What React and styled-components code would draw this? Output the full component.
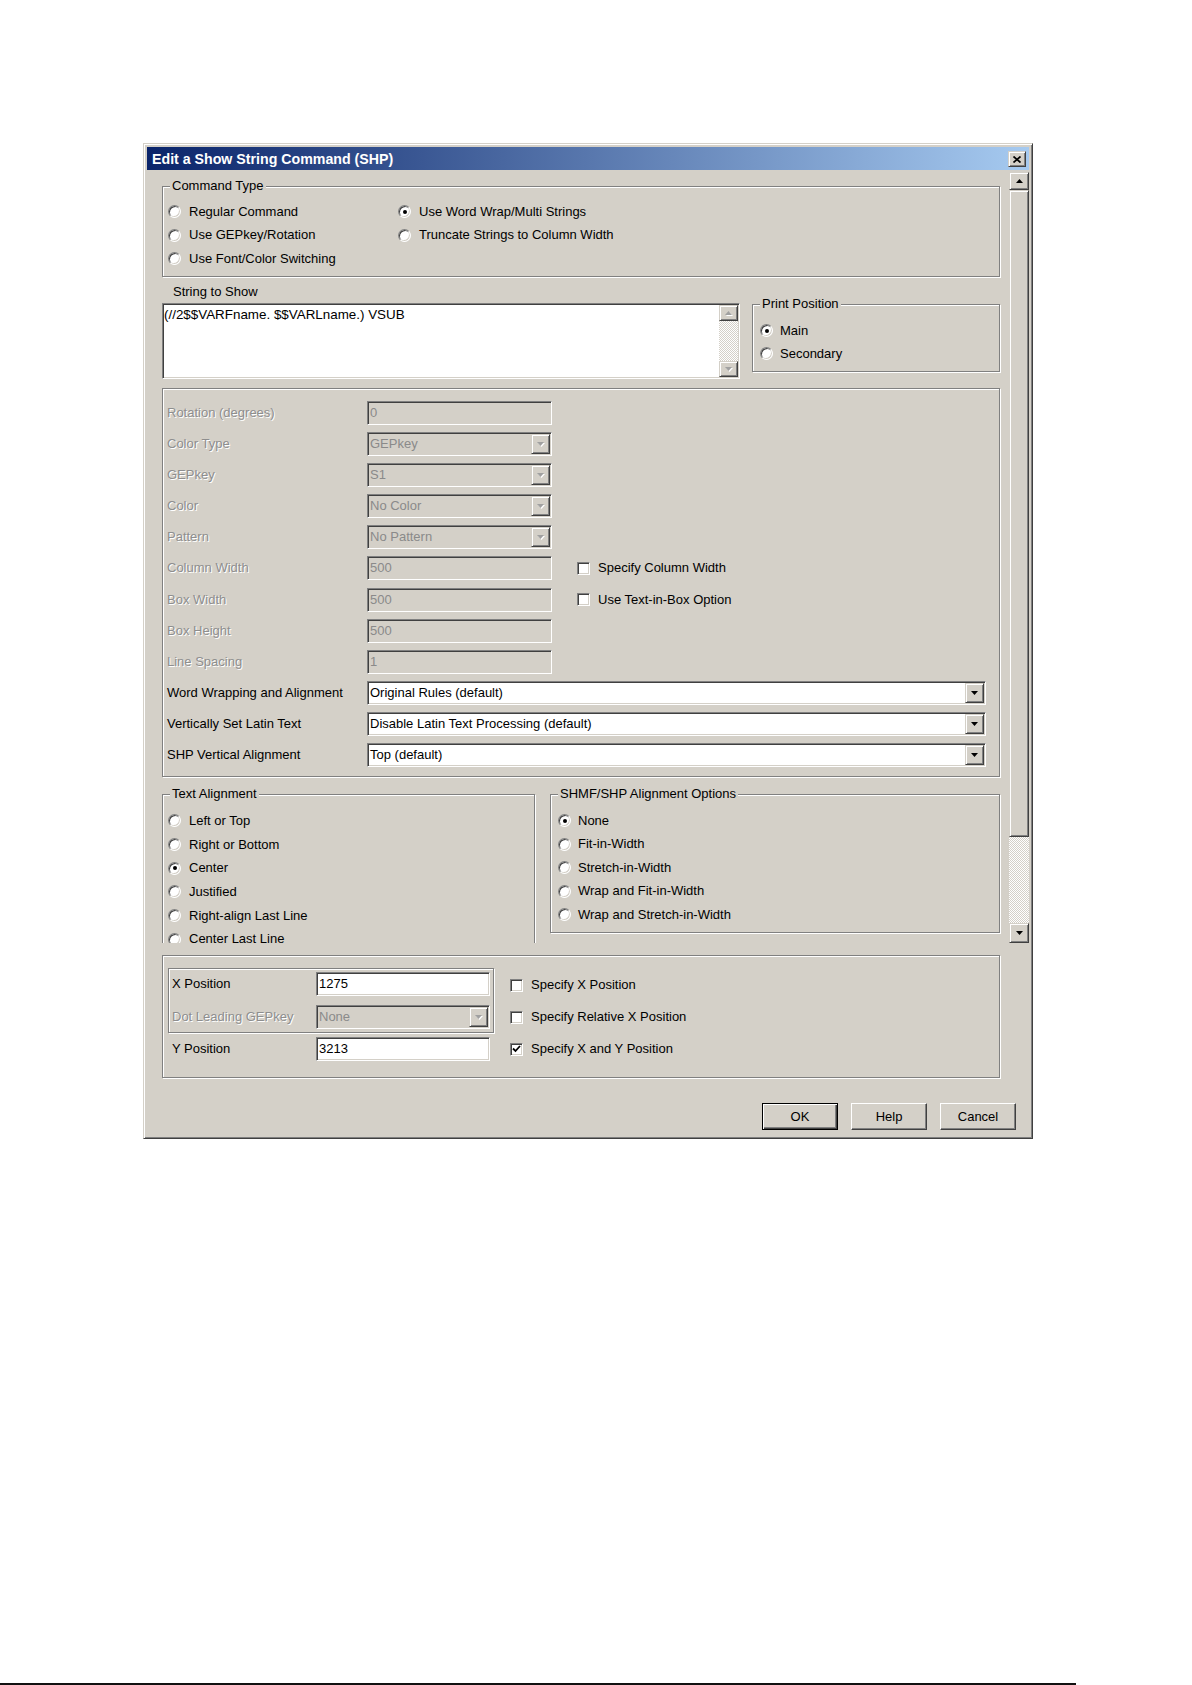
import React from 'react';
import styled, { createGlobalStyle, css } from 'styled-components';

const FACE = '#d4d0c8';

const GlobalStyle = createGlobalStyle`
  html, body { margin: 0; padding: 0; background: #fff; }
  body { font-family: 'Liberation Sans', Arial, sans-serif; font-size: 13px; color: #000; }
  *, *::before, *::after { box-sizing: border-box; }
`;

const raised = css`
  background: ${FACE};
  border: 1px solid;
  border-color: ${FACE} #404040 #404040 ${FACE};
  box-shadow: inset 1px 1px 0 #fff, inset -1px -1px 0 #808080;
`;

const sunken = css`
  border: 1px solid;
  border-color: #808080 #fff #fff #808080;
  box-shadow: inset 1px 1px 0 #404040, inset -1px -1px 0 ${FACE};
`;

const dither = css`
  background: repeating-conic-gradient(#fff 0 25%, ${FACE} 0 50%) 0 0 / 2px 2px;
`;

const Page = styled.div`
  display: flex;
  flex-direction: column;
  height: 1685px;
  padding-top: 143px;
  overflow: hidden;
`;

const Window = styled.div`
  margin-left: 143px;
  width: 890px;
  height: 996px;
  flex: none;
  background: ${FACE};
  border: 1px solid;
  border-color: ${FACE} #404040 #404040 ${FACE};
  box-shadow: inset 1px 1px 0 #fff, inset -1px -1px 0 #808080;
  padding: 3px;
  display: flex;
  flex-direction: column;
`;

const TitleBar = styled.div`
  height: 23px;
  flex: none;
  background: linear-gradient(to right, #0a246a, #a6caf0);
  display: flex;
  align-items: center;
  padding: 0 3px 0 5px;
`;

const TitleText = styled.span`
  flex: 1;
  color: #fff;
  font-weight: bold;
  font-size: 14.2px;
  white-space: nowrap;
`;

const CloseButton = styled.span`
  ${raised};
  width: 18px;
  height: 16px;
  margin-top: 1px;
  display: flex;
  align-items: center;
  justify-content: center;
`;

const ScrollArea = styled.div`
  display: flex;
  height: 771px;
  margin-top: 2px;
  flex: none;
`;

const Viewport = styled.div`
  flex: 1;
  overflow: hidden;
  padding: 6px 9px 0 15px;
  display: flex;
  flex-direction: column;
`;

const VScroll = styled.div`
  width: ${p => p.$w}px;
  flex: none;
  display: flex;
  flex-direction: column;
  margin: ${p => p.$m || 0};
`;

const ScrollButton = styled.span`
  ${raised};
  height: ${p => p.$h}px;
  flex: none;
  display: flex;
  align-items: center;
  justify-content: center;
`;

const Thumb = styled.span`
  ${raised};
  height: ${p => p.$h}px;
  flex: none;
`;

const Track = styled.span`
  ${dither};
  flex: 1;
`;

const ArrowSvg = styled.svg`
  display: block;
  overflow: visible;
`;

const Arrow = ({ up, disabled }) => (
  <ArrowSvg width="7" height="4" viewBox="0 0 7 4">
    {disabled && (
      <polygon points={up ? '1,5 4.5,1 8,5' : '1,1 8,1 4.5,5'} fill="#fff" />
    )}
    <polygon
      points={up ? '0,4 3.5,0 7,4' : '0,0 7,0 3.5,4'}
      fill={disabled ? '#a0a0a0' : '#000'}
    />
  </ArrowSvg>
);

const Group = styled.fieldset`
  margin: 0;
  min-width: 0;
  min-inline-size: 0;
  width: ${p => p.$w}px;
  padding: ${p => p.$pad};
  margin-top: ${p => p.$mt || 0}px;
  border: 1px solid #808080;
  box-shadow: inset 1px 1px 0 #fff, 1px 1px 0 #fff;
  flex: none;
`;

const Legend = styled.legend`
  margin-left: 7px;
  padding: 0 2px;
  line-height: 16px;
  background: ${FACE};
`;

const RadioGrid = styled.div`
  display: grid;
  padding-left: ${p => p.$pl}px;
  grid-template-columns: ${p => p.$cols || '1fr'};
  grid-template-rows: repeat(${p => p.$rows}, ${p => p.$rh}px);
  grid-auto-flow: column;
`;

const OptionRow = styled.label`
  display: flex;
  align-items: center;
  gap: ${p => p.$gap || 8}px;
  white-space: nowrap;
  line-height: 16px;
`;

const RadioCircle = styled.span`
  ${sunken};
  width: 13px;
  height: 13px;
  border-radius: 50%;
  flex: none;
  background: #fff;
  display: flex;
  align-items: center;
  justify-content: center;
  &::after {
    content: '';
    width: 4px;
    height: 4px;
    border-radius: 50%;
    background: ${p => (p.$on ? '#000' : 'transparent')};
  }
`;

const CheckSquare = styled.span`
  ${sunken};
  width: 13px;
  height: 13px;
  flex: none;
  background: #fff;
  display: flex;
  align-items: center;
  justify-content: center;
`;

const Radio = ({ on, children, gap }) => (
  <OptionRow $gap={gap}>
    <RadioCircle $on={on} />
    <span>{children}</span>
  </OptionRow>
);

const Check = ({ on, children }) => (
  <OptionRow $gap={8}>
    <CheckSquare>
      {on && (
        <svg width="9" height="8" viewBox="0 0 9 8">
          <polyline points="1,3.5 3.5,6 8,1" fill="none" stroke="#000" strokeWidth="1.8" />
        </svg>
      )}
    </CheckSquare>
    <span>{children}</span>
  </OptionRow>
);

const StringRow = styled.div`
  display: flex;
  align-items: flex-start;
  gap: 12px;
  margin-top: 7px;
`;

const StringCol = styled.div`
  width: 578px;
  flex: none;
  display: flex;
  flex-direction: column;
`;

const Caption = styled.span`
  margin-left: 11px;
  line-height: 16px;
`;

const TextBox = styled.div`
  ${sunken};
  margin-top: 3px;
  height: 76px;
  background: #fff;
  display: flex;
`;

const TextContent = styled.div`
  flex: 1;
  padding: 3px 0 0 1px;
  line-height: 16px;
  font-size: 13.4px;
  white-space: nowrap;
`;

const BigGroup = styled(Group)`
  display: grid;
  grid-template-columns: 200px 185px 1fr;
  grid-auto-rows: 24px;
  row-gap: 7.1px;
`;

const RowLabel = styled.span`
  align-self: center;
  line-height: 16px;
  white-space: nowrap;
  grid-column: 1;
  color: ${p => (p.$disabled ? '#8e8e8e' : '#000')};
  text-shadow: ${p => (p.$disabled ? '1px 1px 0 #fff' : 'none')};
`;

const Field = styled.div`
  ${sunken};
  height: 24px;
  background: ${p => (p.$disabled ? FACE : '#fff')};
  color: ${p => (p.$disabled ? '#8a8a8a' : '#000')};
  display: flex;
  align-items: center;
  padding-left: 2px;
  white-space: nowrap;
  overflow: hidden;
  grid-column: ${p => (p.$span ? '2 / -1' : 'auto')};
`;

const FieldText = styled.span`
  flex: 1;
  line-height: 16px;
`;

const DropButton = styled.span`
  ${raised};
  flex: none;
  width: 19px;
  height: 20px;
  margin: 1px;
  display: flex;
  align-items: center;
  justify-content: center;
`;

const CheckCell = styled.div`
  padding-left: 25px;
  display: flex;
  align-items: center;
`;

const Input = ({ value, disabled }) => (
  <Field $disabled={disabled}>
    <FieldText>{value}</FieldText>
  </Field>
);

const Select = ({ value, disabled, span }) => (
  <Field $disabled={disabled} $span={span}>
    <FieldText>{value}</FieldText>
    <DropButton>
      <Arrow disabled={disabled} />
    </DropButton>
  </Field>
);

const AlignRow = styled.div`
  display: flex;
  align-items: flex-start;
  gap: 15px;
  margin-top: 9px;
`;

const BottomPanel = styled.div`
  flex: 1;
  display: flex;
  flex-direction: column;
  padding: 12px 13px 0 15px;
`;

const PositionGroup = styled(Group)`
  display: flex;
  gap: 16px;
  height: 123px;
`;

const PosLeft = styled.div`
  width: 326px;
  display: flex;
  flex-direction: column;
`;

const InnerBox = styled.div`
  border: 1px solid #808080;
  box-shadow: inset 1px 1px 0 #fff, 1px 1px 0 #fff;
  padding: 3px;
  display: grid;
  grid-template-columns: 144px 174px;
  grid-auto-rows: 24px;
  row-gap: 9px;
`;

const PosRow = styled.div`
  display: grid;
  grid-template-columns: 144px 174px;
  height: 24px;
  margin-top: 4px;
  padding-left: 4px;
`;

const PosChecks = styled.div`
  margin-top: 1px;
  display: grid;
  grid-template-rows: repeat(3, 32px);
  align-items: center;
`;

const ButtonRow = styled.div`
  display: flex;
  justify-content: flex-end;
  gap: 13px;
  margin-top: 25px;
`;

const PushButton = styled.button`
  width: 76px;
  height: 27px;
  padding: 0;
  font: inherit;
  font-size: 13px;
  color: #000;
  background: ${FACE};
  border: 1px solid;
  border-color: ${p => (p.$default ? '#000' : '#fff #404040 #404040 #fff')};
  box-shadow: ${p =>
    p.$default
      ? 'inset 1px 1px 0 #fff, inset -1px -1px 0 #404040, inset -2px -2px 0 #808080'
      : 'inset -1px -1px 0 #808080'};
`;

const ScanLine = styled.div`
  margin-top: auto;
  width: 1076px;
  height: 2px;
  background: #111;
  flex: none;
`;

const rows = [
  { label: 'Rotation (degrees)', kind: 'input', value: '0' },
  { label: 'Color Type', kind: 'select', value: 'GEPkey' },
  { label: 'GEPkey', kind: 'select', value: 'S1' },
  { label: 'Color', kind: 'select', value: 'No Color' },
  { label: 'Pattern', kind: 'select', value: 'No Pattern' },
  { label: 'Column Width', kind: 'input', value: '500', check: 'Specify Column Width' },
  { label: 'Box Width', kind: 'input', value: '500', check: 'Use Text-in-Box Option' },
  { label: 'Box Height', kind: 'input', value: '500' },
  { label: 'Line Spacing', kind: 'input', value: '1' },
];

const bigRows = [
  { label: 'Word Wrapping and Alignment', value: 'Original Rules (default)' },
  { label: 'Vertically Set Latin Text', value: 'Disable Latin Text Processing (default)' },
  { label: 'SHP Vertical Alignment', value: 'Top (default)' },
];

export default function App() {
  return (
    <>
      <GlobalStyle />
      <Page>
        <Window>
          <TitleBar>
            <TitleText>Edit a Show String Command (SHP)</TitleText>
            <CloseButton>
              <svg width="8" height="7" viewBox="0 0 8 7">
                <path d="M0.5 0.5 L7.5 6.5 M7.5 0.5 L0.5 6.5" stroke="#000" strokeWidth="1.7" />
              </svg>
            </CloseButton>
          </TitleBar>

          <ScrollArea>
            <Viewport>
              <Group $w={838} $pad="6px 0 5.5px 0">
                <Legend>Command Type</Legend>
                <RadioGrid $pl={5} $cols="230px 1fr" $rows={3} $rh={23.5}>
                  <Radio>Regular Command</Radio>
                  <Radio>Use GEPkey/Rotation</Radio>
                  <Radio>Use Font/Color Switching</Radio>
                  <Radio on>Use Word Wrap/Multi Strings</Radio>
                  <Radio>Truncate Strings to Column Width</Radio>
                </RadioGrid>
              </Group>

              <StringRow>
                <StringCol>
                  <Caption>String to Show</Caption>
                  <TextBox>
                    <TextContent>(//2$$VARFname. $$VARLname.) VSUB</TextContent>
                    <VScroll $w={19} $m="1px">
                      <ScrollButton $h={16}>
                        <Arrow up disabled />
                      </ScrollButton>
                      <Track />
                      <ScrollButton $h={16}>
                        <Arrow disabled />
                      </ScrollButton>
                    </VScroll>
                  </TextBox>
                </StringCol>
                <Group $w={248} $mt={12} $pad="7px 0 6px 0">
                  <Legend>Print Position</Legend>
                  <RadioGrid $pl={7} $rows={2} $rh={23}>
                    <Radio on gap={7}>Main</Radio>
                    <Radio gap={7}>Secondary</Radio>
                  </RadioGrid>
                </Group>
              </StringRow>

              <BigGroup as="div" $w={838} $mt={9} $pad="12px 13px 9px 4px">
                {rows.map(r => (
                  <React.Fragment key={r.label}>
                    <RowLabel $disabled>{r.label}</RowLabel>
                    {r.kind === 'input' ? (
                      <Input value={r.value} disabled />
                    ) : (
                      <Select value={r.value} disabled />
                    )}
                    <CheckCell>{r.check && <Check>{r.check}</Check>}</CheckCell>
                  </React.Fragment>
                ))}
                {bigRows.map(r => (
                  <React.Fragment key={r.label}>
                    <RowLabel>{r.label}</RowLabel>
                    <Select value={r.value} span />
                  </React.Fragment>
                ))}
              </BigGroup>

              <AlignRow>
                <Group $w={373} $pad="7px 0 6px 0">
                  <Legend>Text Alignment</Legend>
                  <RadioGrid $pl={5} $rows={6} $rh={23.7}>
                    <Radio>Left or Top</Radio>
                    <Radio>Right or Bottom</Radio>
                    <Radio on>Center</Radio>
                    <Radio>Justified</Radio>
                    <Radio>Right-align Last Line</Radio>
                    <Radio>Center Last Line</Radio>
                  </RadioGrid>
                </Group>
                <Group $w={450} $pad="7px 0 5.5px 0">
                  <Legend>SHMF/SHP Alignment Options</Legend>
                  <RadioGrid $pl={7} $rows={5} $rh={23.5}>
                    <Radio on gap={7}>None</Radio>
                    <Radio gap={7}>Fit-in-Width</Radio>
                    <Radio gap={7}>Stretch-in-Width</Radio>
                    <Radio gap={7}>Wrap and Fit-in-Width</Radio>
                    <Radio gap={7}>Wrap and Stretch-in-Width</Radio>
                  </RadioGrid>
                </Group>
              </AlignRow>
            </Viewport>

            <VScroll $w={20}>
              <ScrollButton $h={18}>
                <Arrow up />
              </ScrollButton>
              <Thumb $h={647} />
              <Track />
              <ScrollButton $h={20}>
                <Arrow />
              </ScrollButton>
            </VScroll>
          </ScrollArea>

          <BottomPanel>
            <PositionGroup as="div" $w={838} $pad="12px 0 0 5px">
              <PosLeft>
                <InnerBox>
                  <RowLabel>X Position</RowLabel>
                  <Input value="1275" />
                  <RowLabel $disabled>Dot Leading GEPkey</RowLabel>
                  <Select value="None" disabled />
                </InnerBox>
                <PosRow>
                  <RowLabel>Y Position</RowLabel>
                  <Input value="3213" />
                </PosRow>
              </PosLeft>
              <PosChecks>
                <Check>Specify X Position</Check>
                <Check>Specify Relative X Position</Check>
                <Check on>Specify X and Y Position</Check>
              </PosChecks>
            </PositionGroup>

            <ButtonRow>
              <PushButton $default>OK</PushButton>
              <PushButton>Help</PushButton>
              <PushButton>Cancel</PushButton>
            </ButtonRow>
          </BottomPanel>
        </Window>
        <ScanLine />
      </Page>
    </>
  );
}
